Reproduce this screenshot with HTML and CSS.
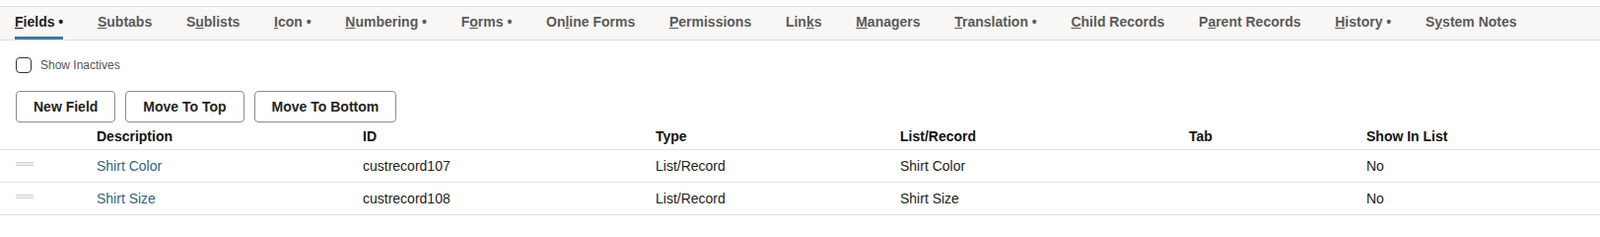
FILE: index.html
```html
<!DOCTYPE html>
<html>
<head>
<meta charset="utf-8">
<link rel="stylesheet" href="styles.css">
</head>
<body>
<nav class="tabs">
  <span class="tab active"><u>F</u>ields •</span>
  <span class="tab"><u>S</u>ubtabs</span>
  <span class="tab">S<u>u</u>blists</span>
  <span class="tab"><u>I</u>con •</span>
  <span class="tab"><u>N</u>umbering •</span>
  <span class="tab">F<u>o</u>rms •</span>
  <span class="tab">On<u>l</u>ine Forms</span>
  <span class="tab"><u>P</u>ermissions</span>
  <span class="tab">Lin<u>k</u>s</span>
  <span class="tab"><u>M</u>anagers</span>
  <span class="tab"><u>T</u>ranslation •</span>
  <span class="tab"><u>C</u>hild Records</span>
  <span class="tab">P<u>a</u>rent Records</span>
  <span class="tab"><u>H</u>istory •</span>
  <span class="tab">S<u>y</u>stem Notes</span>
</nav>

<div class="options">
  <span class="checkbox"></span>
  <span class="option-label">Show Inactives</span>
</div>

<div class="buttons">
  <button class="btn">New Field</button>
  <button class="btn">Move To Top</button>
  <button class="btn">Move To Bottom</button>
</div>

<div class="grid">
  <div class="row head">
    <div class="cell"></div>
    <div class="cell">Description</div>
    <div class="cell">ID</div>
    <div class="cell">Type</div>
    <div class="cell">List/Record</div>
    <div class="cell">Tab</div>
    <div class="cell">Show In List</div>
  </div>
  <div class="row">
    <div class="cell"><span class="handle"></span></div>
    <div class="cell"><a class="link">Shirt Color</a></div>
    <div class="cell">custrecord107</div>
    <div class="cell">List/Record</div>
    <div class="cell">Shirt Color</div>
    <div class="cell"></div>
    <div class="cell">No</div>
  </div>
  <div class="row">
    <div class="cell"><span class="handle"></span></div>
    <div class="cell"><a class="link">Shirt Size</a></div>
    <div class="cell">custrecord108</div>
    <div class="cell">List/Record</div>
    <div class="cell">Shirt Size</div>
    <div class="cell"></div>
    <div class="cell">No</div>
  </div>
</div>
</body>
</html>
```

FILE: styles.css
```css
* { box-sizing: border-box; }

body {
  margin: 0;
  font-family: "Liberation Sans", Arial, sans-serif;
  color: #222;
  background: #fff;
}

.tabs {
  margin-top: 6px;
  display: flex;
  gap: 34.7px;
  padding-left: 15px;
  background: #f8f7f5;
  border-top: 1px solid #e3e3e3;
  border-bottom: 1px solid #dedede;
  height: 35px;
}

.tab {
  font-size: 14px;
  font-weight: bold;
  color: #5a5a5a;
  line-height: 30px;
  height: 33px;
  white-space: nowrap;
  border-bottom: 3px solid transparent;
}

.tab.active {
  color: #222;
  border-bottom-color: #3a7b97;
}

.options {
  display: flex;
  align-items: center;
  gap: 9px;
  padding-left: 16px;
  margin-top: 17px;
  height: 16px;
}

.checkbox {
  width: 16px;
  height: 16px;
  border: 1.5px solid #333;
  border-radius: 4px;
  background: #fff;
}

.option-label {
  font-size: 12px;
  color: #555;
}

.buttons {
  display: flex;
  gap: 10px;
  padding-left: 16px;
  margin-top: 18px;
}

.btn {
  font-family: "Liberation Sans", Arial, sans-serif;
  font-size: 14px;
  font-weight: bold;
  color: #222;
  background: #fff;
  border: 1px solid #8c8c8c;
  border-radius: 4px;
  height: 32px;
  padding: 0 17px;
}

.grid {
  width: 100%;
}

.row {
  display: grid;
  grid-template-columns: 98px 270px 297px 248px 293px 180px 1fr;
  height: 33px;
  border-bottom: 1px solid #e1e1e1;
  align-items: center;
  font-size: 14px;
  color: #222;
}

.row.head {
  height: 28px;
  font-weight: bold;
  color: #111;
}

.cell {
  white-space: nowrap;
}

.cell:first-child {
  padding-left: 16px;
  display: flex;
  align-items: center;
}

.handle {
  display: block;
  width: 18px;
  height: 4px;
  margin-top: -4px;
  border-top: 1px solid #d4d4d4;
  border-bottom: 1px solid #d4d4d4;
  background: #ececec;
}

.link {
  color: #2f6680;
  text-decoration: none;
}
```
